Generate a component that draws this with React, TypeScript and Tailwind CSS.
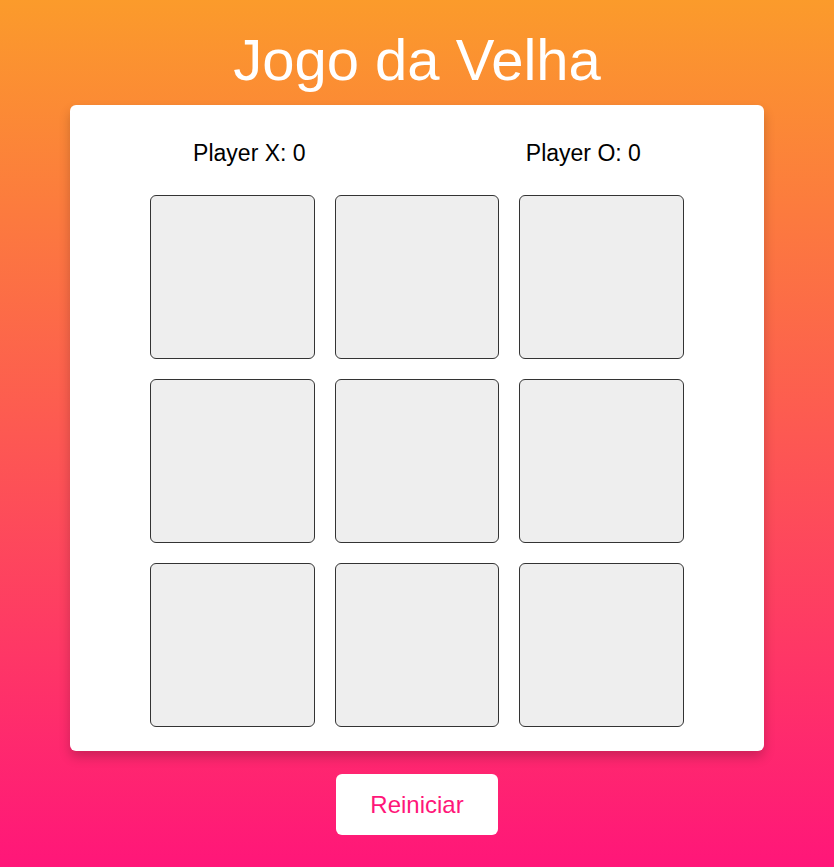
const cells = Array.from({ length: 9 })

export default function App() {
  return (
    <div className="min-h-screen flex flex-col items-center bg-[linear-gradient(to_bottom,#fb9b2b,#ff1679)] font-['Liberation_Sans',Arial,sans-serif]">
      <h1 className="mt-[27px] text-[58px] leading-[65px] text-white">Jogo da Velha</h1>

      <div className="mt-[13px] w-[694px] rounded-md bg-white shadow-[0_6px_12px_rgba(0,0,0,0.2)] px-[13px] pt-[35px] pb-[24px]">
        <div className="flex justify-around text-[23px] leading-[27px] text-black">
          <span>Player X: 0</span>
          <span>Player O: 0</span>
        </div>

        <div className="mt-[28px] mx-auto grid w-[534px] grid-cols-3 gap-5">
          {cells.map((_, i) => (
            <button
              key={i}
              className="h-[164px] rounded-md border border-[#333] bg-[#eeeeee]"
            />
          ))}
        </div>
      </div>

      <button className="mt-[23px] h-[61px] w-[162px] rounded-md bg-white text-[24px] text-[#ff1679]">
        Reiniciar
      </button>
    </div>
  )
}
